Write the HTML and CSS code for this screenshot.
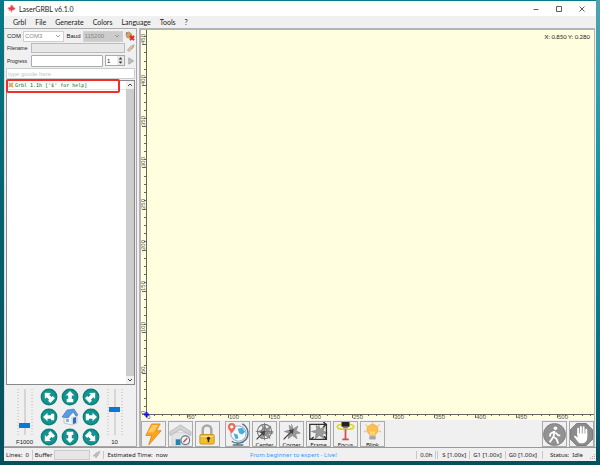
FILE: index.html
```html
<!DOCTYPE html>
<html lang="en">
<head>
  <meta charset="utf-8">
  <title>LaserGRBL v6.1.0</title>
  <link rel="stylesheet" href="styles.css">
</head>
<body>
  <svg class="symbols" width="0" height="0">
    <symbol id="arrow" viewBox="0 0 18 18">
      <circle cx="9" cy="9" r="8.400" fill="#0b7f7d"/>
      <circle cx="9" cy="9" r="7" fill="#15938e"/>
    </symbol>
    <symbol id="up" viewBox="0 0 18 18">
      <path d="M9 3l4.300 4.500h-2.500v3.500h1.500v3.200H5.700V11h1.500V7.500H4.700z" fill="#fff"/>
    </symbol>
    <symbol id="star" viewBox="0 0 24 24">
      <path d="M12 3l2 6 6-4-2 6 5 3-6 1 2 6-6-4-5 4 1-7-6-2 7-2-1-6 4 4z" fill="#999" stroke="#808080" stroke-width=".8"/>
    </symbol>
  </svg>

  <div class="window">
    <header class="titlebar">
      <svg class="app-icon" viewBox="0 0 12 12"><path d="M6 1l1 2 1-1v2l3 2-2 2-2 0-1 3-1-3-2 1 0-2-2-1 2-2 1 1z" fill="#e83e4c" stroke="#f08088" stroke-width=".8"/></svg>
      <span class="title">LaserGRBL v6.1.0</span>
      <button class="win-btn" aria-label="Minimize"><svg viewBox="0 0 8 8"><path d="M1.500 4.500h5"/></svg></button>
      <button class="win-btn" aria-label="Maximize"><svg viewBox="0 0 8 8"><path d="M1.500 1.500h5v5h-5z"/></svg></button>
      <button class="win-btn" aria-label="Close"><svg viewBox="0 0 8 8"><path d="M1.500 1.500l5 5M6.500 1.500l-5 5"/></svg></button>
    </header>

    <nav class="menubar">
      <button>Grbl</button>
      <button>File</button>
      <button>Generate</button>
      <button>Colors</button>
      <button>Language</button>
      <button>Tools</button>
      <button>?</button>
    </nav>

    <main class="main">
      <section class="side">
        <div class="row row-com">
          <label for="com">COM</label>
          <div class="combo"><select id="com"><option>COM3</option></select><svg class="chev" viewBox="0 0 6 6"><path d="M1 2l2 2 2-2"/></svg></div>
          <label for="baud">Baud</label>
          <div class="combo combo-off"><select id="baud"><option>115200</option></select><svg class="chev" viewBox="0 0 6 6"><path d="M1 2l2 2 2-2"/></svg></div>
          <button class="icon-btn" aria-label="Disconnect">
            <svg viewBox="0 0 11 11"><path d="M1 3l3-2 3 2 1 3-3 2-3-1z" fill="#d9a64c" stroke="#896b45" stroke-width=".6"/><path d="M1 1l2 2M5 4l3 3" stroke="#777"/><path d="M5.500 5.500l4.500 4.500M10 5.500l-4.500 4.500" stroke="#e32222" stroke-width="2"/></svg>
          </button>
        </div>
        <div class="row row-file">
          <label for="filename">Filename</label>
          <input id="filename" class="filename" type="text" readonly>
          <button class="icon-btn small" aria-label="Open file">
            <svg viewBox="0 0 9 9"><path d="M1 6l4-4 3-1-1 3-4 4-2 0z" fill="#d2c9bd" stroke="#9a8f86" stroke-width=".6"/><path d="M4 6l4-4" stroke="#e39a4d"/></svg>
          </button>
        </div>
        <div class="row row-progress">
          <label for="progress">Progress</label>
          <input id="progress" class="progress" type="text" readonly>
          <div class="spin">
            <input type="text" value="1" aria-label="Passes">
            <svg viewBox="0 0 7 10"><path d="M0 0h7v10H0z" fill="#e4e4e4"/><path d="M3.500 1.500l2 2.500h-4zM3.500 8.500l2-2.500h-4z" fill="#333"/></svg>
          </div>
          <button class="icon-btn small" aria-label="Run">
            <svg viewBox="0 0 9 9"><path d="M2 1l5.500 3.500L2 8z" fill="#c0c0c0" stroke="#909090" stroke-width=".7"/></svg>
          </button>
        </div>
        <input class="gcode" type="text" placeholder="type gcode here" aria-label="G-code">

        <div class="log">
          <div class="log-list">
            <div class="log-line">
              <svg viewBox="0 0 7 7"><path d="M1 1l2 1 3-1-1 2 1 3-3-1-2 1 1-3z" fill="#e8b45c" stroke="#a57c40" stroke-width=".5"/></svg>
              <span>Grbl 1.1h ['$' for help]</span>
            </div>
          </div>
          <div class="scrollbar">
            <svg viewBox="0 0 8 8"><path d="M2 5l2-2 2 2"/></svg>
            <div class="scroll-thumb"></div>
            <svg viewBox="0 0 8 8"><path d="M2 3l2 2 2-2"/></svg>
          </div>
          <div class="highlight"></div>
        </div>

        <div class="jog">
          <div class="jog-slider">
            <input id="speed" type="range" min="0" max="100" value="17">
            <label for="speed">F1000</label>
          </div>
          <div class="jog-pad">
            <button aria-label="Up left"><svg viewBox="0 0 18 18"><use href="#arrow"/><use href="#up" transform="rotate(-45 9 9)"/></svg></button>
            <button aria-label="Up"><svg viewBox="0 0 18 18"><use href="#arrow"/><use href="#up"/></svg></button>
            <button aria-label="Up right"><svg viewBox="0 0 18 18"><use href="#arrow"/><use href="#up" transform="rotate(45 9 9)"/></svg></button>
            <button aria-label="Left"><svg viewBox="0 0 18 18"><use href="#arrow"/><use href="#up" transform="rotate(-90 9 9)"/></svg></button>
            <button aria-label="Home">
              <svg viewBox="0 0 18 18"><path d="M3 8l4-4 6-1 3 5v7l-5 2-8-2z" fill="#f4f6f9" stroke="#9aa6b5" stroke-width=".6"/><path d="M10 9l6-1v7l-5 2z" fill="#d3d9e2"/><path d="M6 2l7-1 4 6-2 1-3-4-5 6-6-1z" fill="#5a9ae0" stroke="#3971b7" stroke-width=".6"/><path d="M12 10l3-1v6l-3 1z" fill="#336fb0"/><path d="M5 11h3v3H5z" fill="#86b6df"/></svg>
            </button>
            <button aria-label="Right"><svg viewBox="0 0 18 18"><use href="#arrow"/><use href="#up" transform="rotate(90 9 9)"/></svg></button>
            <button aria-label="Down left"><svg viewBox="0 0 18 18"><use href="#arrow"/><use href="#up" transform="rotate(-135 9 9)"/></svg></button>
            <button aria-label="Down"><svg viewBox="0 0 18 18"><use href="#arrow"/><use href="#up" transform="rotate(180 9 9)"/></svg></button>
            <button aria-label="Down right"><svg viewBox="0 0 18 18"><use href="#arrow"/><use href="#up" transform="rotate(135 9 9)"/></svg></button>
          </div>
          <div class="jog-slider">
            <input id="step" type="range" min="0" max="100" value="56">
            <label for="step">10</label>
          </div>
        </div>
      </section>

      <section class="work">
        <div class="preview">
          <svg id="plot" class="plot"></svg>
          <div class="coords">X: 0.850 Y: 0.280</div>
        </div>
        <div class="toolbar">
          <button aria-label="Reset"><svg viewBox="0 0 24 24"><path d="M10 1h9l-4 7h5L7 23l3-10H4z" fill="#fba51f" stroke="#e57f12" stroke-width=".8"/><path d="M11 2h6l-5 8H6z" fill="#ffcb54"/></svg></button>
          <button aria-label="Homing"><svg viewBox="0 0 24 24"><path d="M3 10h18v13H3z" fill="#e3e4e6" stroke="#bbb" stroke-width=".5"/><path d="M12 2L1 9v4l11-6 11 6V9z" fill="#d0d2d5" stroke="#a4a7ab" stroke-width=".6"/><path d="M7 17h5v6H7z" fill="#2680b0"/><circle cx="17" cy="18" r="4.500" fill="#eef3f6" stroke="#637b88" stroke-width="1.200"/><path d="M15 20l4-4" stroke="#d94242" stroke-width="1.500"/></svg></button>
          <button aria-label="Unlock"><svg viewBox="0 0 24 24"><path d="M7 13V7a4.500 4.500 0 019 0v5" fill="none" stroke="#a9a9a9" stroke-width="2.600"/><rect x="4" y="12" width="15" height="10" rx="1.500" fill="#f3bd32" stroke="#bf8614" stroke-width=".8"/><path d="M5 14h13" stroke="#ffe28a"/><circle cx="13" cy="16" r="1.700" fill="#382806"/><path d="M12.200 16h1.600v4h-1.600z" fill="#382806"/></svg></button>
          <button class="gap" aria-label="Zero position"><svg viewBox="0 0 24 24"><circle cx="13" cy="11" r="8" fill="#f3f8fa" stroke="#8aa5b5" stroke-width="1"/><path d="M12 6l5-1 3 4-3 3-3-1zM8 11l4 1 1 4-3 1z" fill="#49aedb"/><path d="M17 1a11 11 0 014 16 11 11 0 01-15 2M12 20v3M7 23h11" fill="none" stroke="#557286" stroke-width="1.500"/><path d="M6 11C3 7 2 6 2 4a4 4 0 018 0c0 2-1 3-4 7z" fill="#eb6a5c"/><circle cx="6" cy="4" r="1.700" fill="#fff"/></svg></button>
          <button class="captioned"><svg viewBox="0 0 24 24"><use href="#star"/><circle cx="12" cy="12" r="9" fill="none" stroke="#777" stroke-width="1.400"/><circle cx="12" cy="12" r="4" fill="none" stroke="#777"/><path d="M12 1v22M1 12h22" stroke="#777"/><path d="M2 22l9-9M12 12l-4 1 3 3z" fill="#444" stroke="#444" stroke-width="1.600"/></svg><span>Center</span></button>
          <button class="captioned"><svg viewBox="0 0 24 24"><use href="#star"/><path d="M2 22l11-11M14 10l-4 1 3 3z" fill="#444" stroke="#444" stroke-width="1.600"/></svg><span>Corner</span></button>
          <button class="captioned"><svg viewBox="0 0 24 24"><use href="#star"/><path d="M1 3h21v19H1zM18 0l4 3-4 3M6 19l-4 3M19 18l3 4" fill="none" stroke="#333" stroke-width="1.600"/></svg><span>Frame</span></button>
          <button class="captioned"><svg viewBox="0 0 24 24"><ellipse cx="12" cy="6" rx="10.500" ry="3.500" fill="none" stroke="#e0d31c" stroke-width="2"/><path d="M7 0h10v6H7z" fill="#222"/><path d="M9 6h6v2H9z" fill="#777"/><path d="M12 9v13M8 22h8" stroke="#dd4a4a" stroke-width="2.200"/></svg><span>Focus</span></button>
          <button class="captioned"><svg viewBox="0 0 24 24"><path d="M12 0v3M3 3l3 3M21 3l-3 3M1 12h3M20 12h3" stroke="#f2c87c" stroke-width="1.600"/><path d="M9 18c0-3-4-4-4-8a7 7 0 0114 0c0 4-4 5-4 8z" fill="#fdc04a" stroke="#eda83c"/><path d="M10 17v-5l2 2 2-2v5" fill="none" stroke="#fff0be"/><path d="M8 18h8v4H8z" fill="#a5a5a5"/></svg><span>Blink</span></button>
          <button class="push" aria-label="Resume"><svg viewBox="0 0 24 24"><circle cx="12" cy="12" r="11.500" fill="#929292" stroke="#777" stroke-width=".8"/><circle cx="13" cy="5.500" r="1.900" fill="#fff"/><path d="M12 8.500l-1 6 3 2 2 5M11 14l-4 6M12 9l-4 2-1 3M13 10l3 3 2 0" fill="none" stroke="#fff" stroke-width="1.900"/></svg></button>
          <button aria-label="Feed hold"><svg viewBox="0 0 24 24"><path d="M7 .5h10L23.500 7v10L17 23.500H7L.5 17V7z" fill="#8b8b8b" stroke="#777"/><path d="M8.500 12V6M11.300 12V4M14.200 12V4.500M17 13V7" stroke="#fff" stroke-width="2" stroke-linecap="round"/><path d="M7.500 11H18v4c0 3-1 5-4 6h-4c-2-1-4-5-6-7l1-1 3 2z" fill="#fff"/></svg></button>
        </div>
      </section>
    </main>

    <footer class="statusbar">
      <span class="cell lines">Lines: &nbsp;0</span>
      <span class="cell buffer">Buffer <span class="buffer-bar"></span>
        <svg viewBox="0 0 9 9"><path d="M1 6l3-3 4-2-1 3-3 4-1-2z" fill="#bbb" stroke="#aaa" stroke-width=".5"/></svg>
      </span>
      <span class="cell time">Estimated Time: &nbsp;now</span>
      <a class="promo" href="#">From beginner to expert - Live!</a>
      <span class="cell">0.0h</span>
      <span class="cell double">S [1.00x]</span>
      <span class="cell">G1 [1.00x]</span>
      <span class="cell">G0 [1.00x]</span>
      <span class="cell status">Status: &nbsp;Idle</span>
      <svg class="grip" viewBox="0 0 7 7"><path d="M5 0h1v1H5zM3 2h1v1H3zM5 2h1v1H5zM1 4h1v1H1zM3 4h1v1H3zM5 4h1v1H5z" fill="#aaa"/></svg>
    </footer>
  </div>

  <script src="plot.js"></script>
</body>
</html>
```
FILE: styles.css
```css
* {
  box-sizing: border-box;
}
body {
  margin: 0;
  height: 100vh;
  padding: 1px 4px 4px 4px;
  background:
    linear-gradient(#4da3b0, #2aa0ae 20%, #0491a0 45%, #057080 80%, #04505f) right / 4px 100% no-repeat,
    linear-gradient(#087a88, #06606e 50%, #04505f);
  font-family: Lato, "Open Sans", sans-serif;
  font-size: 7px;
  line-height: 8px;
  color: #222;
}
button {
  padding: 0;
  border: 0;
  background: none;
  font: inherit;
  color: inherit;
}
input, select {
  min-width: 0;
  margin: 0;
  font: inherit;
  color: inherit;
}
svg {
  display: block;
}
.symbols {
  position: absolute;
}
.window {
  height: 100%;
  display: flex;
  flex-direction: column;
  background: #f0f0f0;
}

/* title and menu */
.titlebar {
  display: flex;
  align-items: center;
  height: 15px;
  padding: 0 3px;
  background: #fff;
}
.app-icon {
  width: 9px;
  height: 9px;
  margin-right: 3px;
}
.title {
  flex: 1;
}
.win-btn {
  width: 23px;
  display: flex;
  justify-content: center;
}
.win-btn svg {
  width: 8px;
  height: 8px;
  fill: none;
  stroke: #333;
  stroke-width: 0.8;
}
.menubar {
  display: flex;
  gap: 9px;
  height: 12px;
  padding: 0 9px;
}

/* left side */
.main {
  flex: 1;
  min-height: 0;
  display: flex;
  gap: 2px;
  padding-right: 1px;
}
.side {
  width: 133px;
  display: flex;
  flex-direction: column;
  border: 1px solid #a9a9a9;
  border-left-color: #ddd;
  padding: 1px 1px 0 1px;
  font-family: "Liberation Sans", Arial, sans-serif;
  font-size: 6px;
}
.row {
  display: flex;
  align-items: center;
  gap: 2px;
}
.row-com,
.row-file {
  height: 12px;
}
.row-progress {
  height: 13px;
}
.row label {
  margin-left: 1px;
}
.row-file label,
.row-progress label {
  width: 22px;
  font-size: 5px;
}
.combo {
  flex: 1;
  display: flex;
  align-items: center;
  height: 11px;
  border: 1px solid #d0d0d0;
  background: #fff;
  color: #888;
}
.combo-off {
  background: #ccc;
}
.combo select {
  flex: 1;
  width: 10px;
  appearance: none;
  border: 0;
  padding: 0 0 0 1px;
  background: none;
}
.chev {
  width: 6px;
  height: 6px;
  margin-right: 2px;
  fill: none;
  stroke: #888;
  stroke-width: 0.8;
}
.icon-btn svg {
  width: 10px;
  height: 10px;
}
.icon-btn.small svg {
  width: 8px;
  height: 8px;
}
.filename {
  flex: 1;
  height: 10px;
  border: 1px solid #bbb;
  background: #e8e8e8;
}
.progress {
  flex: 1;
  height: 12px;
  border: 1px solid #aaa;
  border-radius: 1px;
  background: #fff;
}
.spin {
  display: flex;
  align-items: center;
  width: 20px;
  height: 11px;
  border: 1px solid #aaa;
  background: #fff;
}
.spin input {
  flex: 1;
  width: 8px;
  padding: 0 1px;
  border: 0;
  background: none;
}
.spin svg {
  width: 7px;
  height: 9px;
}
.gcode {
  height: 11px;
  margin: 1px 0;
  padding: 0 1px;
  border: 1px solid #ccc;
  background: #fff;
}
.gcode::placeholder {
  color: #c4c4c4;
  opacity: 1;
}
.log {
  position: relative;
  flex: 1;
  min-height: 0;
  display: flex;
  border: 1px solid #888;
  background: #fff;
}
.log-list {
  flex: 1;
}
.log-line {
  display: flex;
  align-items: center;
  gap: 1px;
  padding-left: 1px;
  border-bottom: 1px solid #e4e4e4;
  font-family: "DejaVu Sans Mono", monospace;
  font-size: 5px;
  color: #005a10;
}
.log-line svg {
  width: 6px;
  height: 6px;
}
.scrollbar {
  width: 8px;
  display: flex;
  flex-direction: column;
  background: #f0f0f0;
}
.scrollbar svg {
  width: 8px;
  height: 8px;
  fill: none;
  stroke: #444;
}
.scroll-thumb {
  flex: 1;
  background: #cdcdcd;
}
/* red frame around the greeting line */
.highlight {
  position: absolute;
  top: -2px;
  left: -1px;
  width: 114px;
  height: 14px;
  border: 2px solid #ee2f27;
  border-radius: 2px;
}

/* jog */
.jog {
  display: flex;
  justify-content: space-between;
  height: 61px;
  padding: 3px 6px 0 4px;
}
.jog-slider {
  width: 29px;
  display: flex;
  flex-direction: column;
  align-items: center;
  justify-content: space-between;
}
.jog-slider input {
  appearance: none;
  writing-mode: vertical-lr;
  direction: rtl;
  width: 16px;
  height: 46px;
  margin-top: 1px;
  background:
    linear-gradient(#d6d6d6, #d6d6d6) center / 2px 100% no-repeat,
    repeating-linear-gradient(#d4d4d4 0 1px, transparent 1px 3px) left / 2px 100% no-repeat,
    repeating-linear-gradient(#d4d4d4 0 1px, transparent 1px 3px) right / 2px 100% no-repeat;
}
.jog-slider input::-webkit-slider-thumb {
  appearance: none;
  width: 11px;
  height: 5px;
  background: #0b78d4;
}
.jog-pad {
  display: grid;
  grid-template-columns: repeat(3, 18px);
  grid-auto-rows: 18px;
  gap: 2px 3px;
}
.jog-pad svg {
  width: 18px;
  height: 18px;
}

/* preview */
.work {
  flex: 1;
  min-width: 0;
  display: flex;
  flex-direction: column;
  border: 2px solid #b4b4b8;
  border-bottom: 0;
  border-right-width: 1px;
}
.preview {
  position: relative;
  flex: 1;
  min-height: 0;
  background: #ffffe0;
}
.plot {
  position: absolute;
  width: 100%;
  height: 100%;
}
.plot text {
  font-family: "Liberation Sans", Arial, sans-serif;
  font-size: 6px;
  fill: #555;
}
.coords {
  position: absolute;
  top: 3px;
  right: 4px;
  font-size: 6px;
}
.toolbar {
  display: flex;
  gap: 2px;
  height: 27px;
  padding-top: 1px;
  overflow: hidden;
}
.toolbar button {
  flex: none;
  width: 25px;
  height: 26px;
  border: 1px solid #aaa;
}
.toolbar svg {
  width: 23px;
  height: 23px;
}
.toolbar .gap {
  margin-left: 3px;
}
.toolbar .push {
  margin-left: auto;
}
.toolbar .captioned {
  display: flex;
  flex-direction: column;
  align-items: center;
  overflow: hidden;
  font-size: 6px;
}
.toolbar .captioned svg {
  flex: none;
  width: 19px;
  height: 19px;
}

/* status bar */
.statusbar {
  display: flex;
  align-items: center;
  height: 14px;
  padding-left: 2px;
  border-top: 1px solid #999;
  font-family: "Noto Sans", "Open Sans", sans-serif;
  font-size: 6px;
  white-space: nowrap;
}
.cell {
  padding: 0 3px;
  border-left: 1px solid #c8c8c8;
}
.lines {
  padding-left: 0;
  border-left: 0;
}
.buffer {
  display: flex;
  align-items: center;
  gap: 2px;
  padding: 0 2px;
}
.buffer-bar {
  width: 36px;
  height: 10px;
  border: 1px solid #ccc;
  background: #e6e6e6;
}
.buffer svg {
  width: 9px;
  height: 9px;
}
.promo {
  flex: 1;
  text-align: center;
  color: #3399ff;
  text-decoration: none;
}
.double {
  padding-left: 4px;
  border-left: 3px double #c8c8c8;
}
.status {
  margin-left: 2px;
  padding: 0 6px 0 7px;
}
.grip {
  align-self: flex-end;
  width: 7px;
  height: 7px;
}
```
FILE: plot.js
```js
const plot = document.getElementById("plot");
const unit = 0.822; // pixels per mm

function add(tag, attrs, text) {
  const el = document.createElementNS("http://www.w3.org/2000/svg", tag);
  for (let key in attrs) el.setAttribute(key, attrs[key]);
  if (text !== undefined) el.textContent = text;
  plot.appendChild(el);
}

function drawPlot() {
  plot.innerHTML = "";
  let w = plot.clientWidth;
  let h = plot.clientHeight;
  let x0 = 5;
  let y0 = h - 6;

  let d = `M${x0 + 0.5} 0V${y0 + 0.5}H${w}`;
  for (let mm = 0; x0 + mm * unit < w; mm += 10) {
    let x = Math.round(x0 + mm * unit);
    d += `M${x + 0.5} ${y0}v${mm % 50 ? 2 : 4}`;
    if (mm % 50 == 0) add("text", { x: x + 1, y: y0 + 5 }, mm);
  }
  for (let mm = 0; y0 - mm * unit > 0; mm += 10) {
    let y = Math.round(y0 - mm * unit);
    d += `M${x0} ${y + 0.5}h${mm % 50 ? -2 : -4}`;
    if (mm % 50 == 0) add("text", { transform: `translate(${x0 - 1} ${y}) rotate(-90)` }, mm);
  }
  add("path", { d: d, stroke: "#66665a", fill: "none" });
  add("path", { d: `M${x0 - 2} ${y0 + 0.5}h5M${x0 + 0.5} ${y0 - 2}v5`, stroke: "#1414f0", "stroke-width": 2 });
}

drawPlot();
window.addEventListener("resize", drawPlot);
```
